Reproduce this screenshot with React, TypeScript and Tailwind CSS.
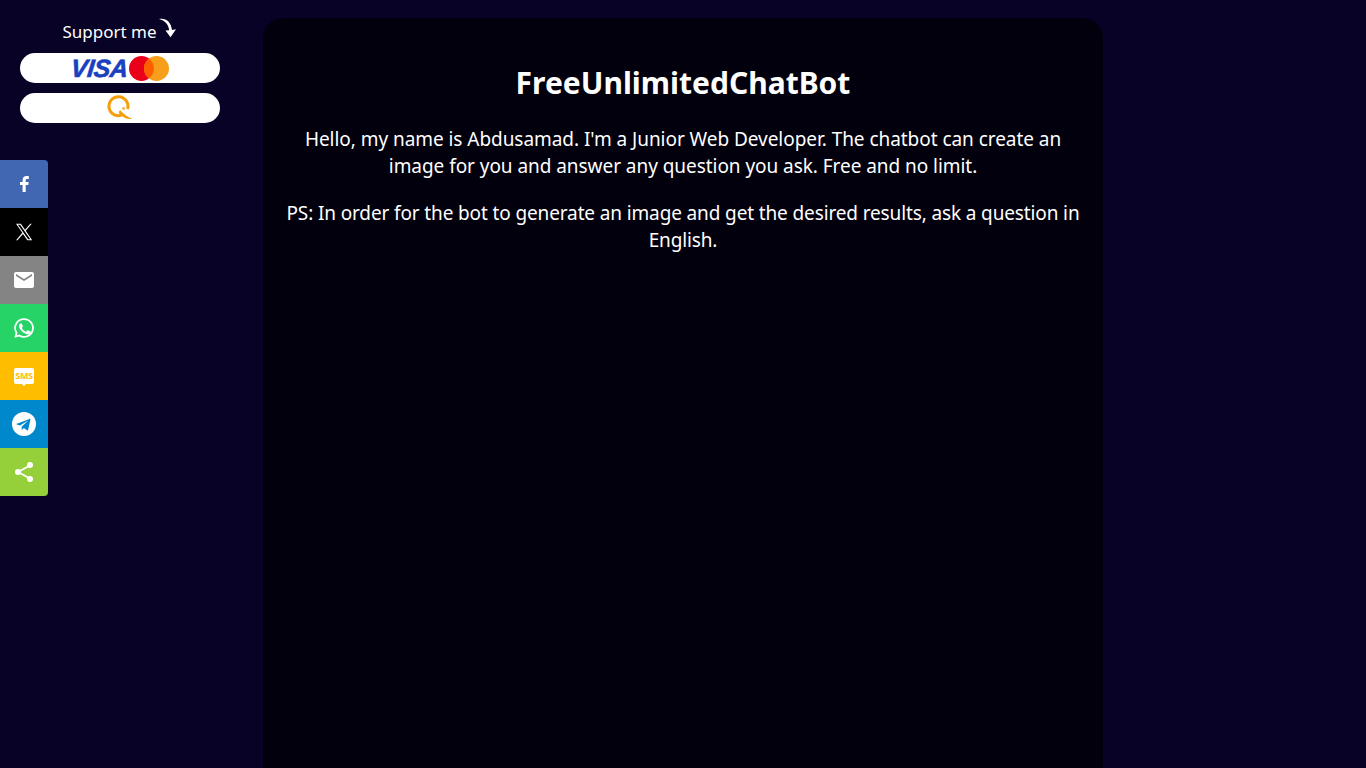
import type { ReactNode } from 'react'

const font = { fontFamily: '"Noto Sans", "Open Sans", sans-serif' }

type ShareItem = { name: string; className: string; icon: ReactNode }

const shareItems: ShareItem[] = [
  {
    name: 'facebook',
    className: 'bg-[#4267b2] rounded-tr',
    icon: (
      <svg viewBox="0 0 24 24" className="h-6 w-6" fill="#fff">
        <path d="M13.700 20v-7h2.600l.4-3h-3V8.300c0-.9.3-1.400 1.500-1.400h1.600V4.200c-.3 0-1.200-.1-2.300-.1-2.300 0-3.900 1.400-3.900 4V10H8v3h2.600v7z" />
      </svg>
    ),
  },
  {
    name: 'x',
    className: 'bg-black',
    icon: (
      <svg viewBox="0 0 24 24" className="h-[18px] w-[18px]" fill="#fff">
        <path d="M14.300 10.200 22.300 1h-1.900l-7 8L7.800 1H1.400l8.400 12.100L1.400 23h1.900l7.300-8.500 5.900 8.500h6.400zM3.900 2.400h2.900l13.600 19.200h-2.900z" />
      </svg>
    ),
  },
  {
    name: 'email',
    className: 'bg-[#848484]',
    icon: (
      <svg viewBox="0 0 24 24" className="h-6 w-6" fill="#fff">
        <path d="M20 4H4c-1.100 0-2 .9-2 2v12c0 1.100.9 2 2 2h16c1.100 0 2-.9 2-2V6c0-1.100-.9-2-2-2zm0 4-8 5-8-5V6l8 5 8-5z" />
      </svg>
    ),
  },
  {
    name: 'whatsapp',
    className: 'bg-[#25d366]',
    icon: (
      <svg viewBox="0 0 24 24" className="h-6 w-6" fill="#fff">
        <path d="M12 2.200a9.800 9.800 0 0 0-8.400 14.800L2.300 21.800l4.900-1.300A9.800 9.800 0 1 0 12 2.200zm0 1.800a8 8 0 1 1-4.300 14.700l-.3-.2-2.600.7.700-2.500-.2-.3A8 8 0 0 1 12 4zM8.800 7.400c-.2 0-.5.100-.8.400-.3.300-1 1-1 2.400s1 2.800 1.200 3c.1.200 2 3.100 4.900 4.300 2.400 1 2.900.8 3.400.7.500 0 1.700-.7 1.900-1.300.2-.7.2-1.200.2-1.300-.1-.1-.3-.2-.6-.4l-1.900-.9c-.3-.1-.5-.1-.7.2l-.9 1.100c-.1.200-.3.200-.6.100-.3-.2-1.200-.5-2.300-1.400-.9-.8-1.400-1.700-1.600-2-.2-.3 0-.5.100-.6l.5-.6c.1-.2.2-.3.3-.5.100-.2 0-.4 0-.5L9.800 8c-.2-.5-.4-.5-.6-.5z" />
      </svg>
    ),
  },
  {
    name: 'sms',
    className: 'bg-[#ffbd00]',
    icon: (
      <span className="relative -mt-[1px] flex h-[16px] w-[20px] items-center justify-center rounded-[2px] bg-white text-[9px] font-bold leading-none tracking-[-0.3px] text-[#ffbd00] after:absolute after:left-[7px] after:top-[15px] after:h-0 after:w-0 after:border-x-[3px] after:border-t-[3px] after:border-x-transparent after:border-t-white">
        SMS
      </span>
    ),
  },
  {
    name: 'telegram',
    className: 'bg-[#0088cc]',
    icon: (
      <svg viewBox="0 0 24 24" className="h-6 w-6">
        <circle cx="12" cy="12" r="12" fill="#fff" />
        <path fill="#0088cc" d="M5 11.800 17.400 6.900c.6-.2 1.100.1.900 1l-2.100 9.900c-.1.700-.6.900-1.200.5l-3.200-2.400-1.600 1.500c-.2.200-.3.300-.6.300l.2-3.300 5.900-5.300c.3-.2-.1-.4-.4-.2l-7.300 4.600-3.100-1c-.7-.2-.7-.7.100-1z" />
      </svg>
    ),
  },
  {
    name: 'share',
    className: 'bg-[#95d03a] rounded-br',
    icon: (
      <svg viewBox="0 0 24 24" className="h-6 w-6" fill="#fff">
        <path fill="none" stroke="#fff" strokeWidth="1.800" d="M18 5.500 6 12l12 6.500" />
        <circle cx="18" cy="5" r="3" />
        <circle cx="6" cy="12" r="3" />
        <circle cx="18" cy="19" r="3" />
      </svg>
    ),
  },
]

function PayButton({ children }: { children: ReactNode }) {
  return (
    <a className="flex h-[30px] w-[200px] items-center justify-center rounded-[15px] bg-white">
      {children}
    </a>
  )
}

export default function App() {
  return (
    <div className="flex h-screen overflow-hidden bg-[#080326] text-white" style={font}>
      <aside className="w-[263px] shrink-0 pl-5 pt-[18px]">
        <div className="flex w-[200px] flex-col items-center">
          <div className="flex h-[27px] items-start">
            <span className="mt-[2px] text-[17px] leading-[24px]">Support me</span>
            <svg viewBox="0 0 20 22" className="-mt-[1px] ml-[1px] h-[22px] w-[20px]" fill="#fff">
              <path d="M1 2C7 .5 13 4 14 13l4-.8-5.500 8-5-6.700 3.700-.3C10.500 7.500 7 3.500 1 2z" />
            </svg>
          </div>
          <div className="mt-2 flex flex-col gap-[10px]">
            <PayButton>
              <span
                className="mr-[2px] -skew-x-6 text-[25px] font-bold italic leading-none tracking-[-0.4px] text-[#1a3fbf]"
                style={{ fontFamily: '"Liberation Sans", sans-serif', WebkitTextStroke: '0.6px #1a3fbf' }}
              >
                VISA
              </span>
              <svg viewBox="0 0 40 25" className="h-[25px] w-[40px]">
                <circle cx="12.500" cy="12.500" r="12.500" fill="#eb001b" />
                <circle cx="27.500" cy="12.500" r="12.500" fill="#f79e1b" />
                <path fill="#ff5f00" d="M20 2.500a12.500 12.500 0 0 1 0 20 12.500 12.500 0 0 1 0-20z" />
              </svg>
            </PayButton>
            <PayButton>
              <svg viewBox="0 0 26 26" className="h-[26px] w-[26px]">
                <path
                  d="M16 19.500A9.500 9.500 0 1 1 20.500 14"
                  fill="none"
                  stroke="#f59e0b"
                  strokeWidth="3"
                />
                <path d="M13 15c3.500 4 7.500 7 12.500 9-5.500.5-9.500-1.500-13-5-1-1.200-.5-3 .5-4z" fill="#f59e0b" />
                <circle cx="16.500" cy="13.500" r="1.300" fill="#f59e0b" />
              </svg>
            </PayButton>
          </div>
        </div>
      </aside>

      {/* floating share bar */}
      <div className="fixed left-0 top-[160px] flex w-12 flex-col">
        {shareItems.map((item) => (
          <a key={item.name} className={`flex h-12 w-12 items-center justify-center ${item.className}`}>
            {item.icon}
          </a>
        ))}
      </div>

      <main className="mt-[18px] w-[840px] shrink-0 rounded-t-[20px] bg-[#02000d] px-5 pt-[42px] text-center">
        <h1 className="text-[30px] font-bold leading-[46px]">FreeUnlimitedChatBot</h1>
        <p className="mt-5 text-[19px] leading-[27px] tracking-[-0.05px]">
          Hello, my name is Abdusamad. I'm a Junior Web Developer. The chatbot can create an image for you and answer any
          question you ask. Free and no limit.
        </p>
        <p className="mt-5 text-[19px] leading-[27px] tracking-[-0.13px]">
          PS: In order for the bot to generate an image and get the desired results, ask a question in English.
        </p>
      </main>
    </div>
  )
}
